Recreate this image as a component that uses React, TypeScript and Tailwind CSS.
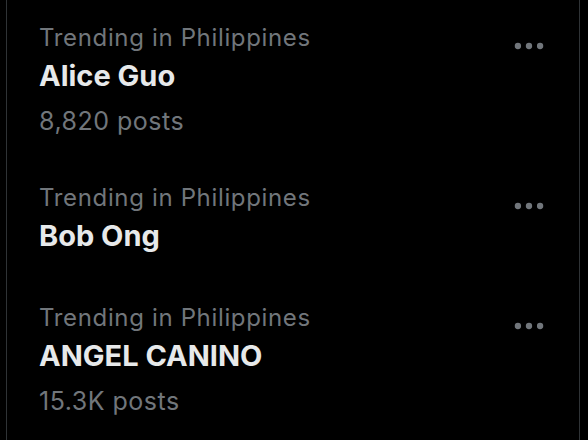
import React from 'react';

type Trend = {
  context: string;
  title: string;
  posts?: string;
};

const trends: Trend[] = [
  { context: 'Trending in Philippines', title: 'Alice Guo', posts: '8,820 posts' },
  { context: 'Trending in Philippines', title: 'Bob Ong' },
  { context: 'Trending in Philippines', title: 'ANGEL CANINO', posts: '15.3K posts' },
];

const MoreIcon = () => (
  <svg viewBox="0 0 24 24" className="w-[38px] h-[38px] fill-[#71767b]" aria-hidden="true">
    <circle cx="5" cy="12" r="2" />
    <circle cx="12" cy="12" r="2" />
    <circle cx="19" cy="12" r="2" />
  </svg>
);

const TrendItem = ({ trend }: { trend: Trend }) => {
  return (
    <div className="flex justify-between items-start pl-8 pr-[31px] py-[22px]">
      <div className="flex flex-col">
        <span className="text-[24px] leading-[32px] text-[#71767b] tracking-[0.65px]">{trend.context}</span>
        <span className="text-[29px] leading-[44px] font-bold text-[#e7e9ea] tracking-normal">{trend.title}</span>
        {trend.posts && (
          <span className="mt-[6px] text-[25px] leading-[34px] text-[#71767b] tracking-[0.5px]">{trend.posts}</span>
        )}
      </div>
      <div className="mt-[5px]">
        <MoreIcon />
      </div>
    </div>
  );
};

export default function App() {
  return (
    <div className="w-[588px] h-[440px] bg-black overflow-hidden font-['Inter',sans-serif]">
      <div className="ml-[6px] w-[574px] h-full border-x border-[#2f3336]">
        {trends.map((t) => (
          <TrendItem key={t.title} trend={t} />
        ))}
      </div>
    </div>
  );
}
